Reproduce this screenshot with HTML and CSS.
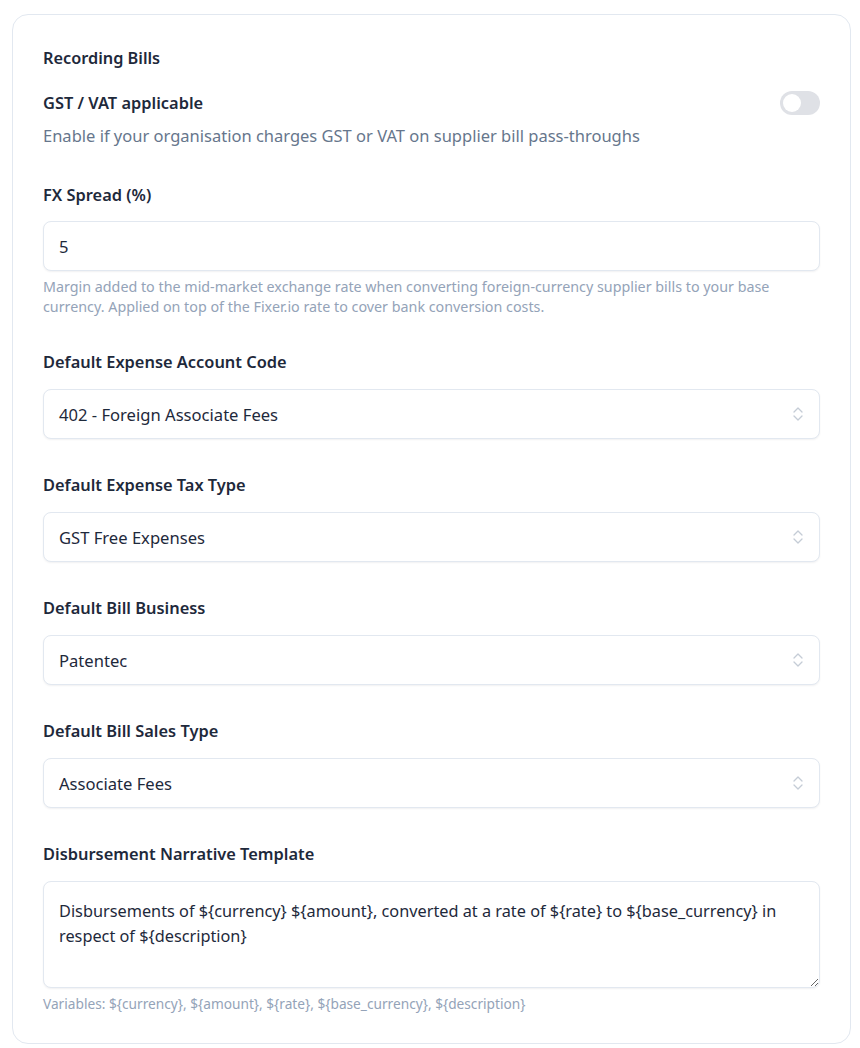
FILE: index.html
```html
<!DOCTYPE html>
<html lang="en">
<head>
<meta charset="utf-8">
<title>Recording Bills</title>
<link rel="stylesheet" href="styles.css">
</head>
<body>
<section class="card">
  <h2 class="card-title">Recording Bills</h2>

  <div class="toggle-row">
    <div class="toggle-text">
      <div class="field-label">GST / VAT applicable</div>
      <p class="toggle-desc">Enable if your organisation charges GST or VAT on supplier bill pass-throughs</p>
    </div>
    <span class="switch" role="switch" aria-checked="false"><span class="knob"></span></span>
  </div>

  <div class="field field-first">
    <label class="field-label" for="fx">FX Spread (%)</label>
    <input class="control" id="fx" type="text" value="5">
    <p class="help">Margin added to the mid-market exchange rate when converting foreign-currency supplier bills to your base currency. Applied on top of the Fixer.io rate to cover bank conversion costs.</p>
  </div>

  <div class="field">
    <label class="field-label">Default Expense Account Code</label>
    <div class="control select"><span>402 - Foreign Associate Fees</span>
      <svg class="chev" viewBox="0 0 12 18" width="12" height="18"><path d="M2 7l4-4 4 4M2 11l4 4 4-4" fill="none" stroke="currentColor" stroke-width="1.3" stroke-linecap="round" stroke-linejoin="round"/></svg>
    </div>
  </div>

  <div class="field">
    <label class="field-label">Default Expense Tax Type</label>
    <div class="control select"><span>GST Free Expenses</span>
      <svg class="chev" viewBox="0 0 12 18" width="12" height="18"><path d="M2 7l4-4 4 4M2 11l4 4 4-4" fill="none" stroke="currentColor" stroke-width="1.3" stroke-linecap="round" stroke-linejoin="round"/></svg>
    </div>
  </div>

  <div class="field">
    <label class="field-label">Default Bill Business</label>
    <div class="control select"><span>Patentec</span>
      <svg class="chev" viewBox="0 0 12 18" width="12" height="18"><path d="M2 7l4-4 4 4M2 11l4 4 4-4" fill="none" stroke="currentColor" stroke-width="1.3" stroke-linecap="round" stroke-linejoin="round"/></svg>
    </div>
  </div>

  <div class="field">
    <label class="field-label">Default Bill Sales Type</label>
    <div class="control select"><span>Associate Fees</span>
      <svg class="chev" viewBox="0 0 12 18" width="12" height="18"><path d="M2 7l4-4 4 4M2 11l4 4 4-4" fill="none" stroke="currentColor" stroke-width="1.3" stroke-linecap="round" stroke-linejoin="round"/></svg>
    </div>
  </div>

  <div class="field">
    <label class="field-label" for="narr">Disbursement Narrative Template</label>
    <textarea class="control textarea" id="narr" rows="3">Disbursements of ${currency} ${amount}, converted at a rate of ${rate} to ${base_currency} in respect of ${description}</textarea>
    <p class="help help-small">Variables: ${currency}, ${amount}, ${rate}, ${base_currency}, ${description}</p>
  </div>
</section>
</body>
</html>
```

FILE: styles.css
```css
* { box-sizing: border-box; }

html, body { background: #ffffff; }

body {
  margin: 0;
  padding: 14px 9px 5px 12px;
  font-family: "Noto Sans", "Open Sans", sans-serif;
  color: #1e293b;
}

.card {
  border: 1px solid #e2e8f0;
  border-radius: 16px;
  padding: 31px 30px 30px 30px;
  background: #fff;
}

.card-title {
  margin: 0 0 21px;
  font-size: 16.3px;
  line-height: 24px;
  font-weight: 600;
  color: #1e293b;
}

.toggle-row {
  display: flex;
  align-items: flex-start;
  justify-content: space-between;
}

.field-label {
  display: block;
  font-size: 16.4px;
  line-height: 24px;
  font-weight: 600;
  color: #1e293b;
}

.toggle-desc {
  margin: 9px 0 0;
  font-size: 16.5px;
  line-height: 24px;
  color: #66768c;
}

/* toggle switch, off state */
.switch {
  flex: none;
  width: 40px;
  height: 24px;
  border-radius: 12px;
  background: #dfe1e6;
  display: flex;
  align-items: center;
  padding: 3px;
}

.knob {
  width: 18px;
  height: 18px;
  border-radius: 50%;
  background: #ffffff;
}

.field { margin-top: 34px; }
.field-first { margin-top: 35px; }

.field .field-label { margin-bottom: 15px; }
.field-first .field-label { margin-bottom: 14px; }

.control {
  display: block;
  width: 100%;
  height: 50px;
  border: 1px solid #e2e8f0;
  border-radius: 8px;
  background: #fff;
  box-shadow: 0 1px 2px rgba(15, 23, 42, 0.06);
  padding: 0 15px;
  font-family: inherit;
  font-size: 16.6px;
  color: #1e293b;
  outline: none;
}

.select {
  display: flex;
  align-items: center;
  justify-content: space-between;
}

.chev {
  color: #c5ccd6;
}

.textarea {
  height: 107px;
  padding: 17px 15px 15px;
  line-height: 25px;
  font-size: 16.3px;
  resize: vertical;
}

.help {
  margin: 6px 0 0;
  font-size: 14.3px;
  line-height: 19.5px;
  color: #94a3b8;
}

.help-small {
  margin-top: 7px;
  font-size: 13.7px;
  line-height: 18px;
}
```
